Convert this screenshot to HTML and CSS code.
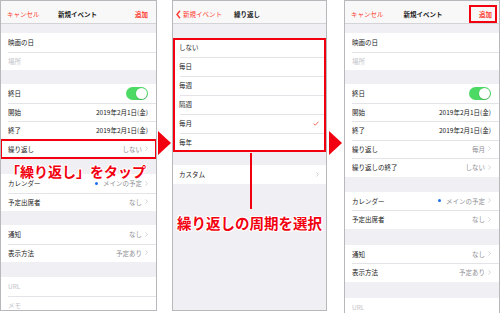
FILE: index.html
```html
<!DOCTYPE html>
<html lang="ja">
<head>
  <meta charset="UTF-8" />
  <title>繰り返しの設定</title>
  <link rel="stylesheet" href="styles.css">
</head>
<body>
  <div class="sheet">

    <!-- step 1 -->
    <div class="phone phone-1">
      <div class="nav">
        <span class="nav-left">キャンセル</span>
        <span class="nav-title">新規イベント</span>
        <span class="nav-right">追加</span>
      </div>
      <div class="gap gap-top"></div>
      <div class="group">
        <div class="row"><span>映画の日</span></div>
        <div class="row"><span class="placeholder">場所</span></div>
      </div>
      <div class="gap gap-14"></div>
      <div class="group">
        <div class="row"><span>終日</span><span class="toggle"><span class="knob"></span></span></div>
        <div class="row"><span>開始</span><span class="date">2019年2月1日(金)</span></div>
        <div class="row"><span>終了</span><span class="date">2019年2月1日(金)</span></div>
        <div class="row picked"><span>繰り返し</span><span class="value">しない<svg class="chev" viewBox="0 0 4 7"><path d="M0.6 0.6L3.3 3.5L0.6 6.4"/></svg></span></div>
      </div>
      <div class="gap gap-16"></div>
      <div class="group">
        <div class="row"><span>カレンダー</span><span class="value"><span class="dot"></span>メインの予定<svg class="chev" viewBox="0 0 4 7"><path d="M0.6 0.6L3.3 3.5L0.6 6.4"/></svg></span></div>
        <div class="row"><span>予定出席者</span><span class="value">なし<svg class="chev" viewBox="0 0 4 7"><path d="M0.6 0.6L3.3 3.5L0.6 6.4"/></svg></span></div>
      </div>
      <div class="gap gap-14"></div>
      <div class="group">
        <div class="row"><span>通知</span><span class="value">なし<svg class="chev" viewBox="0 0 4 7"><path d="M0.6 0.6L3.3 3.5L0.6 6.4"/></svg></span></div>
        <div class="row"><span>表示方法</span><span class="value">予定あり<svg class="chev" viewBox="0 0 4 7"><path d="M0.6 0.6L3.3 3.5L0.6 6.4"/></svg></span></div>
      </div>
      <div class="gap gap-15"></div>
      <div class="group">
        <div class="row"><span class="placeholder">URL</span></div>
        <div class="row"><span class="placeholder">メモ</span></div>
      </div>

      <div class="note note-1">「繰り返し」をタップ</div>
    </div>

    <div class="step step-1"><span class="arrow"></span></div>

    <!-- step 2 -->
    <div class="phone phone-2">
      <div class="nav">
        <span class="nav-left back"><svg class="back-chev" viewBox="0 0 5 9"><path d="M4 0.8L1 4.5L4 8.2"/></svg>新規イベント</span>
        <span class="nav-title">繰り返し</span>
        <span class="nav-right"></span>
      </div>
      <div class="gap gap-14"></div>
      <div class="group choices">
        <div class="row"><span>しない</span></div>
        <div class="row"><span>毎日</span></div>
        <div class="row"><span>毎週</span></div>
        <div class="row"><span>隔週</span></div>
        <div class="row"><span>毎月</span><svg class="check" viewBox="0 0 7 6"><path d="M0.6 3.2L2.6 5L6.4 0.8"/></svg></div>
        <div class="row"><span>毎年</span></div>
      </div>
      <div class="gap gap-13"></div>
      <div class="group">
        <div class="row"><span>カスタム</span><svg class="chev" viewBox="0 0 4 7"><path d="M0.6 0.6L3.3 3.5L0.6 6.4"/></svg></div>
      </div>

      <div class="leader"></div>
      <div class="note note-2">繰り返しの周期を選択</div>
    </div>

    <div class="step step-2"><span class="arrow"></span></div>

    <!-- step 3 -->
    <div class="phone phone-3">
      <div class="nav">
        <span class="nav-left">キャンセル</span>
        <span class="nav-title">新規イベント</span>
        <span class="nav-right boxed">追加</span>
      </div>
      <div class="gap gap-top"></div>
      <div class="group">
        <div class="row"><span>映画の日</span></div>
        <div class="row"><span class="placeholder">場所</span></div>
      </div>
      <div class="gap gap-14"></div>
      <div class="group">
        <div class="row"><span>終日</span><span class="toggle"><span class="knob"></span></span></div>
        <div class="row"><span>開始</span><span class="date">2019年2月1日(金)</span></div>
        <div class="row"><span>終了</span><span class="date">2019年2月1日(金)</span></div>
        <div class="row"><span>繰り返し</span><span class="value">毎月<svg class="chev" viewBox="0 0 4 7"><path d="M0.6 0.6L3.3 3.5L0.6 6.4"/></svg></span></div>
        <div class="row"><span>繰り返しの終了</span><span class="value">しない<svg class="chev" viewBox="0 0 4 7"><path d="M0.6 0.6L3.3 3.5L0.6 6.4"/></svg></span></div>
      </div>
      <div class="gap gap-15"></div>
      <div class="group">
        <div class="row"><span>カレンダー</span><span class="value"><span class="dot"></span>メインの予定<svg class="chev" viewBox="0 0 4 7"><path d="M0.6 0.6L3.3 3.5L0.6 6.4"/></svg></span></div>
        <div class="row"><span>予定出席者</span><span class="value">なし<svg class="chev" viewBox="0 0 4 7"><path d="M0.6 0.6L3.3 3.5L0.6 6.4"/></svg></span></div>
      </div>
      <div class="gap gap-16"></div>
      <div class="group">
        <div class="row"><span>通知</span><span class="value">なし<svg class="chev" viewBox="0 0 4 7"><path d="M0.6 0.6L3.3 3.5L0.6 6.4"/></svg></span></div>
        <div class="row"><span>表示方法</span><span class="value">予定あり<svg class="chev" viewBox="0 0 4 7"><path d="M0.6 0.6L3.3 3.5L0.6 6.4"/></svg></span></div>
      </div>
      <div class="gap gap-16"></div>
      <div class="group">
        <div class="row"><span class="placeholder">URL</span></div>
        <div class="row"></div>
      </div>
    </div>

  </div>
</body>
</html>
```

FILE: styles.css
```css
:root {
  --red: #ff3b30;
  --mark: #f2000f;
  --ios-gray: #efeff4;
  --line: #e4e4e8;
  --text: #222;
  --sub: #8e8e93;
  --hint: #c4c4c9;
}

* {
  box-sizing: border-box;
  margin: 0;
  padding: 0;
}

body {
  width: 500px;
  height: 313px;
  overflow: hidden;
  background: #fff;
  font-family: "Noto Sans CJK JP", "Noto Sans", sans-serif;
  color: var(--text);
}

.sheet {
  display: flex;
  height: 313px;
}

/* phone frames */
.phone {
  position: relative;
  height: 311px;
  border: 1px solid #b8b8bc;
  background: var(--ios-gray);
  overflow: hidden;
  font-size: 6.5px;
  line-height: 1;
}

.phone-1 { width: 157px; }
.phone-2 { width: 155px; }
.phone-3 {
  width: 156px;
  height: 313px;
  border-bottom: none;
}

/* arrows between steps */
.step {
  display: flex;
  justify-content: center;
  padding-top: 131px;
}

.step-1 { width: 15px; }
.step-2 { width: 17px; }

.arrow {
  width: 0;
  height: 0;
  border-left: 13px solid var(--mark);
  border-top: 12px solid transparent;
  border-bottom: 12px solid transparent;
}

/* nav bar */
.nav {
  height: 23px;
  display: grid;
  grid-template-columns: 1fr auto 1fr;
  align-items: center;
  padding: 4px 8px 0 6px;
  background: #f8f8f8;
  border-bottom: 1px solid #d4d4d8;
}

.nav-left {
  color: var(--red);
  display: flex;
  align-items: center;
}

.nav-title {
  font-weight: 700;
}

.nav-right {
  justify-self: end;
  color: var(--red);
  font-weight: 700;
}

.phone-2 .nav { padding-left: 3px; }
.phone-3 .nav { padding-right: 4px; }

.back-chev {
  width: 5px;
  height: 9px;
  margin-right: 2px;
  fill: none;
  stroke: var(--red);
  stroke-width: 1.4;
}

.nav-right.boxed {
  padding: 4px 3px 4px 8px;
  outline: 2px solid var(--mark);
}

/* grouped table */
.gap-top { height: 9px; }
.gap-13 { height: 13px; }
.gap-14 { height: 14px; }
.gap-15 { height: 15px; }
.gap-16 { height: 16px; }

.group {
  background: #fff;
}

.row {
  height: 18.5px;
  display: flex;
  align-items: center;
  justify-content: space-between;
  padding: 0 8px 0 7px;
}

.row + .row {
  background: linear-gradient(var(--line), var(--line)) right top / calc(100% - 7px) 1px no-repeat;
}

.row.picked {
  outline: 2px solid var(--mark);
  outline-offset: -1px;
}

.phone-2 .row {
  height: 19px;
  padding: 0 7px 0 6px;
}

.choices {
  outline: 2px solid var(--mark);
  outline-offset: -2px;
}

.placeholder {
  color: var(--hint);
}

.value {
  display: flex;
  align-items: center;
  gap: 3px;
  color: var(--sub);
}

.date {
  color: var(--text);
}

.chev {
  width: 3px;
  height: 5px;
  fill: none;
  stroke: #c2c2c7;
  stroke-width: 1;
}

.check {
  width: 6px;
  height: 5px;
  fill: none;
  stroke: var(--red);
  stroke-width: 0.9;
}

.dot {
  width: 3px;
  height: 3px;
  border-radius: 50%;
  background: #1e6ff0;
  margin-right: 2px;
}

.toggle {
  width: 22px;
  height: 13px;
  border-radius: 7px;
  background: #4cd964;
  display: flex;
  justify-content: flex-end;
  align-items: center;
  padding: 1px;
}

.knob {
  width: 11px;
  height: 11px;
  border-radius: 50%;
  background: #fff;
  box-shadow: 0 0.5px 1px rgba(0, 0, 0, 0.3);
}

/* callouts */
.note {
  position: absolute;
  color: var(--mark);
  font-weight: 700;
  font-size: 14px;
  line-height: 1;
  white-space: nowrap;
  text-shadow: 1px 0 #fff, -1px 0 #fff, 0 1px #fff, 0 -1px #fff,
    1px 1px #fff, -1px -1px #fff, 1px -1px #fff, -1px 1px #fff;
}

.note-1 {
  left: 5px;
  top: 163px;
}

.note-2 {
  left: 4px;
  top: 215px;
  font-size: 14.5px;
}

.leader {
  position: absolute;
  left: 77px;
  top: 152px;
  width: 2px;
  height: 56px;
  background: var(--mark);
}
```
